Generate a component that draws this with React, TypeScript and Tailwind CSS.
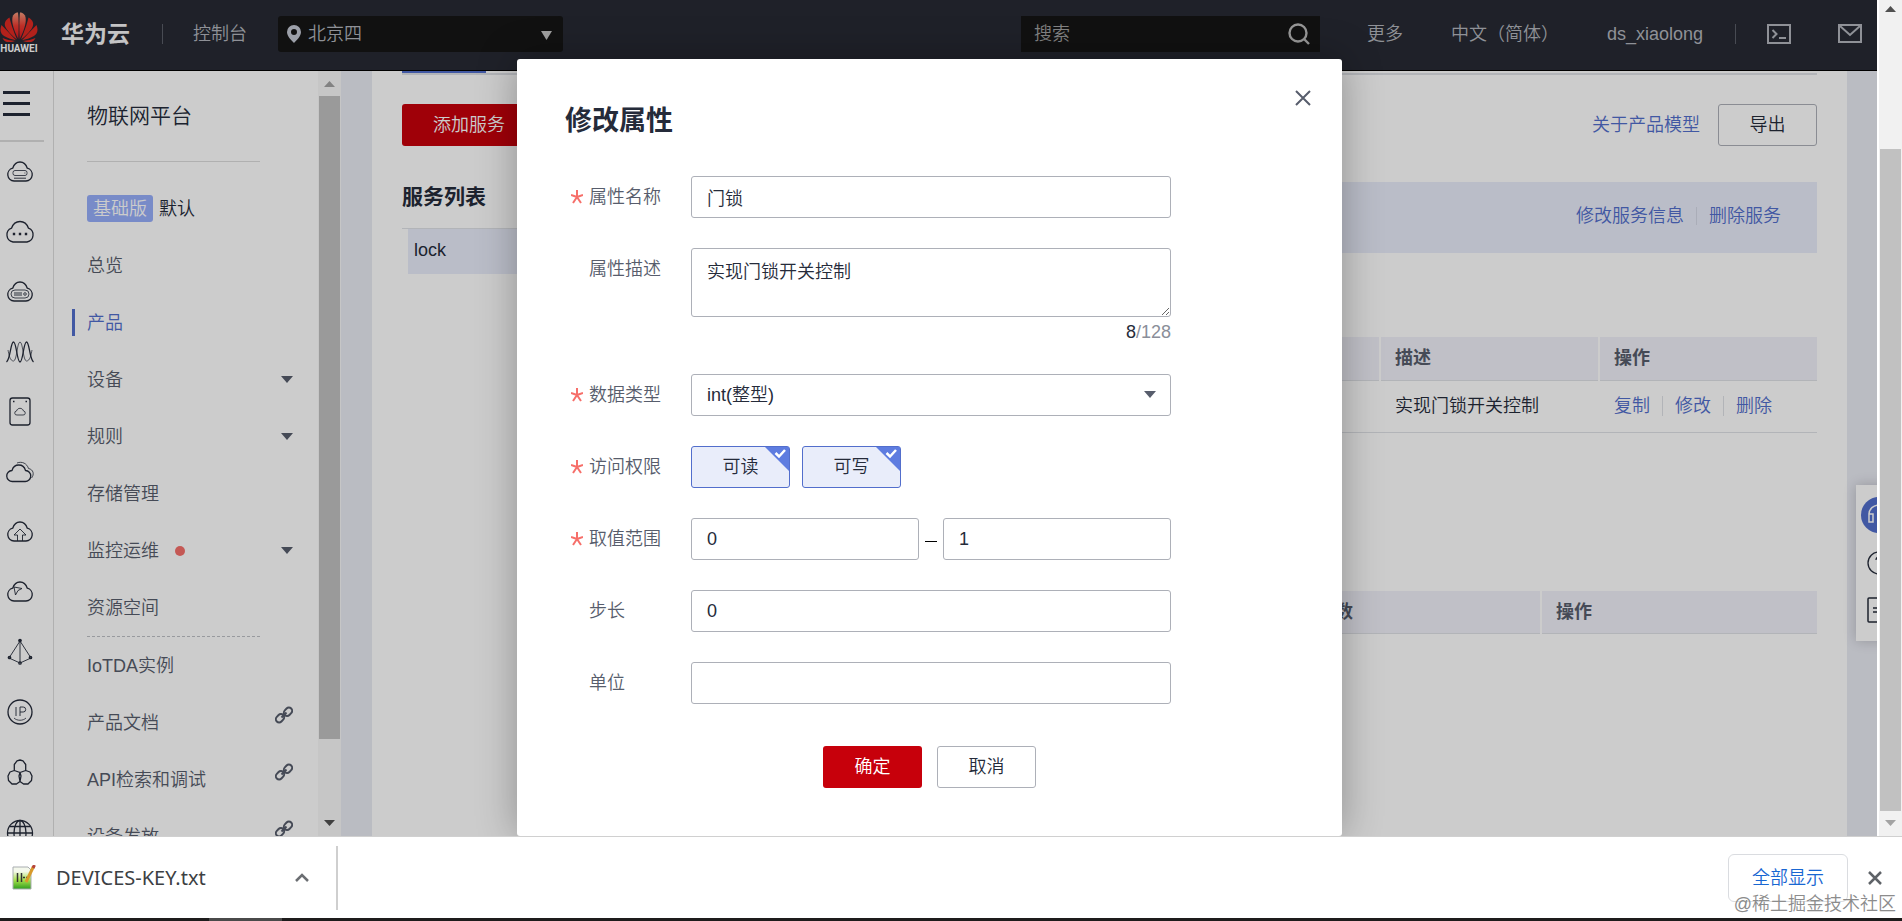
import { useState, type ReactNode } from "react";

interface MenuItem {
    name: string;
    icon?: "arrow" | "link";
    dot?: boolean;
    active?: boolean;
}

const mainMenu: MenuItem[] = [
    { name: "总览" },
    { name: "产品", active: true },
    { name: "设备", icon: "arrow" },
    { name: "规则", icon: "arrow" },
    { name: "存储管理" },
    { name: "监控运维", icon: "arrow", dot: true },
    { name: "资源空间" },
];

const linkMenu: MenuItem[] = [
    { name: "IoTDA实例" },
    { name: "产品文档", icon: "link" },
    { name: "API检索和调试", icon: "link" },
    { name: "设备发放", icon: "link" },
];

const CLOUD = "M8 20H20A6.5 6.5 0 0 0 21.3 7.2C20 3.2 17.5 1 14 1S8 3.2 6.7 7.2A6.5 6.5 0 0 0 8 20Z";

const railIcons: { label: string; art: ReactNode }[] = [
    {
        label: "弹性云服务器",
        art: (
            <>
                <path d={CLOUD} />
                <rect x="7" y="9.5" width="14" height="5" rx="2" strokeWidth="0.8" />
                <path d="M18.5 12h.8M8 17.2h12" strokeWidth="0.9" />
            </>
        ),
    },
    {
        label: "云服务",
        art: (
            <>
                <path d="M7 21H21A7.2 7.2 0 0 0 22.5 7.2C21 3 18 .5 14 .5S7 3 5.5 7.2A7.2 7.2 0 0 0 7 21Z" />
                <path d="M6.8 13h2.4M12.8 13h2.4M18.8 13h2.4" strokeWidth="2.4" />
            </>
        ),
    },
    {
        label: "裸金属服务器",
        art: (
            <>
                <path d={CLOUD} />
                <rect x="5" y="9" width="18" height="8" rx="4" strokeWidth="0.8" />
                <path d="M8 12h8M8 14h8" strokeWidth="0.9" />
                <circle cx="19" cy="13" r="1.3" strokeWidth="0.8" />
            </>
        ),
    },
    {
        label: "弹性伸缩",
        art: (
            <>
                <path d="M.5 21C4.500 18 4.500 1 7.500 1s3.500 20 6.500 20S17.500 1 20.500 1s3 17 7 20" />
                <path d="M2 9C3 14 4 20 7.500 20S11 1 14 1s3 19 6.500 19S25 14 26 9" strokeWidth="0.7" />
            </>
        ),
    },
    {
        label: "云硬盘",
        art: (
            <>
                <rect x="4" y="-3" width="20" height="27" rx="2.500" />
                <path d="M7 .5h1.500M19.500 .5H21" />
                <path d="M11 14h6a2 2 0 0 0 .5-4c-.6-1.800-1.900-2.700-3.500-2.700S11.100 8.200 10.500 10a2 2 0 0 0 .5 4Z" strokeWidth="0.8" />
            </>
        ),
    },
    {
        label: "云备份",
        art: (
            <>
                <path d="M6.500 20.500H19A5.500 5.500 0 0 0 19.500 9.500C18.500 6 16 4 12.800 4S7 6 6 9.500A5.500 5.500 0 0 0 6.500 20.500Z" />
                <path d="M11 2c5-2 10 .5 11.500 5.500 5 1 6 6 3 9.500" strokeWidth="0.8" />
            </>
        ),
    },
    {
        label: "对象存储",
        art: (
            <>
                <path d={CLOUD} />
                <path d="M11.500 20v-6H8l6-6 6 6h-3.500v6" strokeWidth="0.9" />
            </>
        ),
    },
    {
        label: "内容分发",
        art: (
            <>
                <path d={CLOUD} />
                <path d="M8 6l8 1.500-4 2-2.500 4.500z" strokeWidth="0.9" />
            </>
        ),
    },
    {
        label: "虚拟私有云",
        art: (
            <>
                <path d="M14 0v21M14 0 3 17l11 5 11-5L14 0" strokeWidth="0.9" />
                <circle cx="14" cy="-.5" r="1.200" fill="currentColor" />
                <circle cx="3.500" cy="16.500" r="1.200" />
                <circle cx="24.500" cy="16.500" r="1.200" />
                <circle cx="14" cy="22" r="1.200" />
            </>
        ),
    },
    {
        label: "弹性公网IP",
        art: (
            <>
                <circle cx="14" cy="11" r="12" />
                <path d="M10 6v9M14 15V6h3.200a2.500 2.500 0 0 1 0 5H14" strokeWidth="0.9" />
                <path d="M8 17c3 3 9 3 12 0" strokeWidth="0.8" />
            </>
        ),
    },
    {
        label: "云容器引擎",
        art: (
            <path d="M8.300 9.500V3.500L11-.2 14-1l3 .8 2.700 3.700v6M14 11.500 8.300 9.500 4 11l-2 4 .5 4.500L6 23h4.500L14 20.500 17.500 23H22l3.500-3.500L26 15l-2-4-4.300-1.500ZM14 11.500l1 3.500-1 5.500-1-5.500Z" />
        ),
    },
    {
        label: "域名注册",
        art: (
            <>
                <circle cx="14" cy="12" r="12.500" />
                <ellipse cx="14" cy="12" rx="6" ry="12.500" />
                <path d="M14-.5v25M1.500 12h25M3.500 5.500h21M3.500 18.500h21" />
            </>
        ),
    },
];

export default function App() {
    return (
        <div className="flex h-screen flex-col overflow-hidden bg-white font-['Liberation_Sans','Noto_Sans_CJK_SC',sans-serif] text-[18px] leading-6 font-[350] text-[#252b3a]">
            <div className="flex min-h-0 flex-1">
                <div className="relative flex min-w-0 flex-1 flex-col overflow-hidden">
                    <TopBar />
                    <div className="flex min-h-0 flex-1">
                        <IconRail />
                        <SideMenu />
                        <ProductPage />
                    </div>
                    <FloatPanel />

                    {/* Mask + dialog */}
                    <div className="absolute inset-0 flex items-start justify-center bg-black/20 pt-[59px] pr-[18px]">
                        <EditDialog />
                    </div>
                </div>
                <PageScrollbar />
            </div>
            <DownloadBar />
        </div>
    );
}

function Triangle({ up, className }: { up?: boolean; className: string }) {
    return (
        <svg viewBox="0 0 12 7" preserveAspectRatio="none" className={className} fill="currentColor" aria-hidden="true">
            <path d={up ? "M0 7h12L6 0z" : "M0 0h12L6 7z"} />
        </svg>
    );
}

function TopBar() {
    return (
        <header className="flex h-[71px] shrink-0 items-start border-b border-black bg-[#272a34] pt-4 text-[#b3b6bd]">
            <a href="#" aria-label="HUAWEI" className="-mt-1 flex w-[38px] shrink-0 flex-col items-center">
                <svg viewBox="0 0 38 30" className="h-[30px] w-[38px]">
                    <defs>
                        <linearGradient id="petal" x1="0" y1="0" x2="0" y2="1">
                            <stop offset="0" stopColor="#f59a7c" />
                            <stop offset="0.5" stopColor="#ee3b32" />
                            <stop offset="1" stopColor="#d8141c" />
                        </linearGradient>
                    </defs>
                    <g fill="url(#petal)">
                        <path d="M18.300 27C13 17 11 8 13 3.500 14.500 1 17 .5 18 .5c.8 6 .8 18 .3 26.500Z" />
                        <path d="M19.700 27C25 17 27 8 25 3.500 23.500 1 21 .5 20 .5c-.8 6-.8 18-.3 26.500Z" />
                    </g>
                    <g fill="#e02a22">
                        <path d="M17 27.500C13 18 10.500 10 9.500 5.500 5 8 3.500 12 6 16c2 3.500 7 8.500 11 11.500Z" />
                        <path d="M21 27.500c4-9.500 6.500-17.500 7.500-22C33 8 34.500 12 32 16c-2 3.500-7 8.500-11 11.500Z" />
                        <path d="M16 28.200C10 22 5 16.500 1.500 13-.5 18 .5 22 4.500 24.200c3 1.800 8 3.300 11.500 4Z" />
                        <path d="M22 28.200c6-6.200 11-11.700 14.500-15.200 2 5 1 9-3 11.200-3 1.800-8 3.300-11.500 4Z" />
                        <path d="M15.500 29c-5-.5-9.500-1.500-13-3 1.500 3.500 4 4.500 7 4 2 0 4.500-.5 6-1Z" />
                        <path d="M22.500 29c5-.5 9.500-1.500 13-3-1.500 3.500-4 4.500-7 4-2 0-4.500-.5-6-1Z" />
                    </g>
                </svg>
                <span className="font-['Roboto',sans-serif] text-[10px] leading-[14px] font-bold text-white">HUAWEI</span>
            </a>
            <div className="flex h-9 min-w-0 flex-1 items-center">
                <span className="ml-[23px] shrink-0 text-[23px] font-bold text-[#f5f5f7]">华为云</span>
                <span className="ml-8 h-5 w-px shrink-0 bg-[#5b5e68]" />
                <a href="#" className="ml-[30px] shrink-0">控制台</a>
                <label className="relative ml-[31px] block w-[285px] shrink-0">
                    <svg viewBox="0 0 14 18" className="absolute top-[9px] left-[9px] h-[18px] w-[14px]" fill="#c4c8d4">
                        <path fillRule="evenodd" d="M7 0a7 7 0 0 0-7 7c0 4 4 8 7 11 3-3 7-7 7-11a7 7 0 0 0-7-7Zm0 4a3 3 0 1 1 0 6 3 3 0 0 1 0-6Z" />
                    </svg>
                    <select aria-label="区域" className="h-9 w-full appearance-none rounded-[3px] bg-[#161616] pl-[30px] text-[18px] outline-none">
                        <option>北京四</option>
                    </select>
                    <Triangle className="pointer-events-none absolute top-[15px] right-[11px] h-[9px] w-[11px] text-[#c9c9c9]" />
                </label>
                <label className="relative ml-auto block w-[299px] shrink-0">
                    <input
                        type="search"
                        aria-label="搜索"
                        placeholder="搜索"
                        className="h-9 w-full bg-[#161616] pl-[13px] text-[18px] outline-none placeholder:text-[#a3a3a3]"
                    />
                    <svg viewBox="0 0 22 22" className="absolute top-[7px] right-[10px] h-[22px] w-[22px]" fill="none" stroke="#bdbdbd" strokeWidth="2.400">
                        <circle cx="10" cy="10" r="8.500" />
                        <path d="m16 16 5 5" />
                    </svg>
                </label>
                <nav className="flex shrink-0 items-center">
                    <a href="#" className="ml-[47px]">更多</a>
                    <a href="#" className="ml-12">中文（简体）</a>
                    <a href="#" className="ml-12">ds_xiaolong</a>
                    <span className="ml-8 h-5 w-px bg-[#5b5e68]" />
                    <button type="button" aria-label="命令行" className="ml-[31px]">
                        <svg viewBox="0 0 24 20" className="h-5 w-6" fill="none" stroke="currentColor" strokeWidth="2">
                            <rect x="1" y="1" width="22" height="18" />
                            <path d="m5.500 6 4 4-4 4M12 14h7" />
                        </svg>
                    </button>
                    <button type="button" aria-label="消息" className="mr-[15px] ml-[47px]">
                        <svg viewBox="0 0 24 20" className="h-5 w-6" fill="none" stroke="currentColor" strokeWidth="2">
                            <rect x="1" y="1" width="22" height="17" />
                            <path d="m2 2 10 9L22 2" />
                        </svg>
                    </button>
                </nav>
            </div>
        </header>
    );
}

function IconRail() {
    return (
        <aside className="w-[54px] shrink-0 overflow-hidden border-r border-[#dcdcdc]">
            <button type="button" aria-label="服务列表" className="mt-5 ml-[3px] flex h-[25px] w-[27px] flex-col justify-between">
                <span className="h-[3px] w-full bg-[#252b3a]" />
                <span className="h-[3px] w-full bg-[#252b3a]" />
                <span className="h-[3px] w-full bg-[#252b3a]" />
            </button>
            <hr className="mt-6 w-11 border-t-2 border-[#dcdcdc]" />
            <ul>
                {railIcons.map((item) => (
                    <li key={item.label} className="flex h-[60px] items-center pl-[6px]">
                        <a href="#" aria-label={item.label} title={item.label}>
                            <svg
                                viewBox="0 0 28 22"
                                className="h-[22px] w-7 overflow-visible text-[#252b3a]"
                                fill="none"
                                stroke="currentColor"
                                strokeWidth="1.300"
                                strokeLinejoin="round"
                            >
                                {item.art}
                            </svg>
                        </a>
                    </li>
                ))}
            </ul>
        </aside>
    );
}

function MenuRow({ item }: { item: MenuItem }) {
    return (
        <li>
            <a
                href="#"
                className={`relative flex h-[57px] items-center pr-[25px] pl-[33px] ${item.active ? "text-[#526ecc]" : "text-[#575d6c]"}`}
            >
                {item.active && <span className="absolute left-[18px] h-[27px] w-[3px] bg-[#526ecc]" />}
                {item.name}
                {item.dot && <span className="ml-4 h-[10px] w-[10px] rounded-full bg-[#f66f6a]" />}
                {item.icon === "arrow" && <Triangle className="ml-auto h-[7px] w-3" />}
                {item.icon === "link" && (
                    <svg viewBox="0 0 18 18" className="mb-4 ml-auto h-[18px] w-[18px]" fill="none" stroke="currentColor" strokeWidth="2">
                        <rect x="8.500" y="2.500" width="9" height="6.500" rx="3.250" transform="rotate(-45 13 5.750)" />
                        <rect x=".5" y="9" width="9" height="6.500" rx="3.250" transform="rotate(-45 5 12.250)" />
                        <path d="m6.500 11.500 5-5" />
                    </svg>
                )}
            </a>
        </li>
    );
}

function SideMenu() {
    return (
        <aside className="flex w-[287px] shrink-0 overflow-hidden">
            <div className="w-[264px] shrink-0">
                <h2 className="mr-[58px] ml-[33px] h-[91px] border-b border-[#dcdcdc] pt-[33px] text-[21px]">物联网平台</h2>
                <p className="mt-[33px] flex h-[27px] items-center gap-[6px] pl-[33px]">
                    <span className="flex h-[27px] items-center rounded-[3px] bg-[#97aefa] px-[6px] text-white">基础版</span>
                    默认
                </p>
                <ul className="mt-[15px]">
                    {mainMenu.map((item) => (
                        <MenuRow key={item.name} item={item} />
                    ))}
                </ul>
                <hr className="mr-[58px] ml-[33px] border-t border-dashed border-[#bfc1c6]" />
                <ul>
                    {linkMenu.map((item) => (
                        <MenuRow key={item.name} item={item} />
                    ))}
                </ul>
            </div>
            <div className="flex w-[23px] flex-col items-center bg-[#f8f8f8]">
                <Triangle up className="mt-[10px] h-[6px] w-[11px] text-[#a3a3a3]" />
                <div className="mt-[9px] w-[21px] flex-1 bg-[#c1c1c1]" />
                <Triangle className="mt-[81px] mb-[10px] h-[6px] w-[11px] text-[#505050]" />
            </div>
        </aside>
    );
}

function ProductPage() {
    return (
        <main className="min-w-0 flex-1 bg-[#e9ebf3] pr-[30px] pl-[31px]">
            <div className="h-full bg-white px-[30px]">
                <div className="border-b-2 border-[#dfe1e6]">
                    <div className="h-[2px] w-[84px] bg-[#526ecc]" />
                </div>

                <div className="mt-[29px] flex items-center">
                    <button type="button" className="h-[42px] rounded-[3px] bg-[#c7000b] px-[31px] text-white">添加服务</button>
                    <a href="#" className="ml-auto text-[#526ecc]">关于产品模型</a>
                    <button type="button" className="ml-[18px] h-[42px] w-[99px] rounded-[3px] border border-[#adb0b8]">导出</button>
                </div>

                <div className="mt-9 flex gap-9">
                    <section className="w-[210px] shrink-0">
                        <h3 className="text-[21px] leading-[30px] font-bold">服务列表</h3>
                        <ul className="mt-4 border-t border-[#dfe1e6] pl-[6px]">
                            <li className="flex h-[45px] items-center bg-[#e9edfa] pb-[3px] pl-[6px]">lock</li>
                        </ul>
                    </section>

                    <section className="min-w-0 flex-1">
                        <div className="flex h-[71px] items-center justify-end bg-[#e9edfa] pr-9 pb-[3px] text-[#526ecc]">
                            <a href="#">修改服务信息</a>
                            <span className="mx-3 h-[18px] w-px bg-[#d5d9e6]" />
                            <a href="#">删除服务</a>
                        </div>

                        <table className="mt-[84px] w-full table-fixed text-left">
                            <thead className="border-b border-[#dfe1e6] bg-[#f0f1f9] text-[#575d6c]">
                                <tr className="h-[43px]">
                                    <td />
                                    <th className="w-[219px] border-l-2 border-white pl-[14px]">描述</th>
                                    <th className="w-[218px] border-l-2 border-white pl-[14px]">操作</th>
                                </tr>
                            </thead>
                            <tbody>
                                <tr className="h-[52px] border-b border-[#dfe1e6]">
                                    <td />
                                    <td className="pl-[15px]">实现门锁开关控制</td>
                                    <td className="pl-[15px]">
                                        <div className="flex items-center text-[#526ecc]">
                                            <a href="#">复制</a>
                                            <span className="mx-3 h-5 w-px bg-[#dfe1e6]" />
                                            <a href="#">修改</a>
                                            <span className="mx-3 h-5 w-px bg-[#dfe1e6]" />
                                            <a href="#">删除</a>
                                        </div>
                                    </td>
                                </tr>
                            </tbody>
                        </table>

                        <table className="mt-[158px] w-full table-fixed text-left">
                            <thead className="border-b border-[#dfe1e6] bg-[#f0f1f9] text-[#575d6c]">
                                <tr className="h-[43px]">
                                    <td />
                                    <th className="w-[224px]">参数</th>
                                    <th className="w-[276px] border-l-2 border-white pl-[14px]">操作</th>
                                </tr>
                            </thead>
                        </table>
                    </section>
                </div>
            </div>
        </main>
    );
}

function FloatPanel() {
    return (
        <div className="absolute top-[485px] -right-[27px] flex h-[156px] w-12 flex-col items-center bg-white pt-3 pr-[3px] shadow-[0_0_12px_rgba(0,0,0,0.2)]">
            <button type="button" aria-label="客服" className="flex h-9 w-9 items-center justify-center rounded-full bg-[#526ecc]">
                <svg viewBox="0 0 24 24" className="h-6 w-6" fill="none" stroke="#fff" strokeWidth="1.500">
                    <path d="M2 14V11a10 9 0 0 1 20 0v3M2 11h4v8H2zM18 11h4v8h-4zM20 19c0 3-4 4-8 4" />
                </svg>
            </button>
            <button type="button" aria-label="帮助" className="mt-[18px]">
                <svg viewBox="0 0 24 24" className="h-6 w-6" fill="none" stroke="#252b3a" strokeWidth="1.300">
                    <circle cx="12" cy="12" r="11" />
                    <path d="M9 9c0-4 6-4 6 0 0 2-3 2-3 5M12 16v2" />
                </svg>
            </button>
            <button type="button" aria-label="反馈" className="mt-[22px]">
                <svg viewBox="0 0 24 26" className="h-[26px] w-6" fill="none" stroke="#252b3a" strokeWidth="1.500">
                    <rect x="1" y="1" width="22" height="24" rx="1" />
                    <path d="M6 11h12M6 15h12" />
                </svg>
            </button>
        </div>
    );
}

function PageScrollbar() {
    return (
        <div className="flex w-[25px] shrink-0 flex-col items-center border-l-2 border-white bg-[#f1f1f1]">
            <Triangle up className="mt-[6px] h-[6px] w-[11px] text-[#505050]" />
            <div className="mt-[137px] w-[21px] flex-1 bg-[#c1c1c1]" />
            <Triangle className="mt-[9px] mb-[10px] h-[6px] w-[11px] text-[#a3a3a3]" />
        </div>
    );
}

function Field({ label, id, required, children }: { label: string; id: string; required?: boolean; children: ReactNode }) {
    return (
        <div className="mb-[30px] flex items-start">
            <label htmlFor={id} className="flex h-[42px] w-[120px] shrink-0 items-center text-[#575d6c]">
                <span className="w-[18px] shrink-0">
                    {required && (
                        <svg viewBox="0 0 12 14" className="h-[14px] w-3" stroke="#f66f6a" strokeWidth="2" aria-hidden="true">
                            <path d="M6 0v7M6 7 0 5M6 7l6-2M6 7l-4 6M6 7l4 6" />
                        </svg>
                    )}
                </span>
                {label}
            </label>
            <div className="w-[480px]">{children}</div>
        </div>
    );
}

const inputStyle =
    "block h-[42px] w-full rounded-[3px] border border-[#adb0b8] bg-white px-[15px] text-[18px] text-[#252b3a] outline-none";

function EditDialog() {
    const [name, setName] = useState("门锁");
    const [description, setDescription] = useState("实现门锁开关控制");
    const [access, setAccess] = useState({ 可读: true, 可写: true });

    return (
        <form
            role="dialog"
            aria-labelledby="dialog-title"
            className="relative w-[825px] rounded-[3px] bg-white px-12 pt-11 pb-12 shadow-[0_0_40px_rgba(0,0,0,0.3)]"
        >
            <h1 id="dialog-title" className="text-[27px] leading-9 font-bold">修改属性</h1>
            <button type="button" aria-label="关闭" className="absolute top-[31px] right-[31px]">
                <svg viewBox="0 0 16 16" className="h-4 w-4" stroke="#575d6c" strokeWidth="2">
                    <path d="m1 1 14 14M15 1 1 15" />
                </svg>
            </button>

            <div className="mt-[37px] pl-[6px]">
                <Field label="属性名称" id="name" required>
                    <input id="name" value={name} onChange={(e) => setName(e.target.value)} className={inputStyle} />
                </Field>
                <Field label="属性描述" id="description">
                    <textarea
                        id="description"
                        value={description}
                        onChange={(e) => setDescription(e.target.value)}
                        className="block h-[69px] w-full rounded-[3px] border border-[#adb0b8] px-[15px] py-[11px] outline-none"
                    />
                    <p className="h-[27px] pt-[3px] text-right text-[#8a8e99]">
                        <span className="text-[#252b3a]">{description.length}</span>/128
                    </p>
                </Field>
                <Field label="数据类型" id="type" required>
                    <div className="relative">
                        <select id="type" className={`${inputStyle} appearance-none`}>
                            <option>int(整型)</option>
                        </select>
                        <Triangle className="pointer-events-none absolute top-[17px] right-[15px] h-[7px] w-3 text-[#575d6c]" />
                    </div>
                </Field>
                <Field label="访问权限" id="access-可读" required>
                    <div className="flex gap-3">
                        {(["可读", "可写"] as const).map((key) => (
                            <label
                                key={key}
                                className={`relative flex h-[42px] w-[99px] items-center justify-center rounded-[3px] border ${access[key] ? "border-[#526ecc] bg-[#e9edfa]" : "border-[#adb0b8]"}`}
                            >
                                <input
                                    id={`access-${key}`}
                                    type="checkbox"
                                    checked={access[key]}
                                    onChange={() => setAccess({ ...access, [key]: !access[key] })}
                                    className="absolute inset-0 appearance-none"
                                />
                                {key}
                                {access[key] && (
                                    <svg viewBox="0 0 24 24" className="absolute top-0 right-0 h-6 w-6">
                                        <path d="M0 0h24v24z" fill="#5e7ce0" />
                                        <path d="m10.500 6 3.500 3.500 6-6.500" fill="none" stroke="#fff" strokeWidth="2.500" />
                                    </svg>
                                )}
                            </label>
                        ))}
                    </div>
                </Field>
                <Field label="取值范围" id="min" required>
                    <div className="flex items-center">
                        <input id="min" defaultValue="0" className={inputStyle} />
                        <span className="mx-[6px] mt-1 h-px w-3 shrink-0 bg-black" />
                        <input aria-label="最大值" defaultValue="1" className={inputStyle} />
                    </div>
                </Field>
                <Field label="步长" id="step">
                    <input id="step" defaultValue="0" className={inputStyle} />
                </Field>
                <Field label="单位" id="unit">
                    <input id="unit" className={inputStyle} />
                </Field>
            </div>

            <div className="mt-[42px] flex justify-center gap-[15px]">
                <button type="button" className="h-[42px] w-[99px] rounded-[3px] bg-[#c7000b] text-white">确定</button>
                <button type="button" className="h-[42px] w-[99px] rounded-[3px] border border-[#adb0b8]">取消</button>
            </div>
        </form>
    );
}

function DownloadBar() {
    return (
        <footer className="shrink-0">
            <div className="relative flex h-[82px] items-center border-t border-[#d0d0d0] bg-white">
                <svg viewBox="0 0 24 26" className="ml-3 h-[26px] w-6">
                    <defs>
                        <linearGradient id="page" x1="0" y1="0" x2="0" y2="1">
                            <stop offset="0.2" stopColor="#f4f8ec" />
                            <stop offset="0.6" stopColor="#a5e04a" />
                            <stop offset="1" stopColor="#2f9e1d" />
                        </linearGradient>
                    </defs>
                    <path d="M1 2h15l3 3v19H1z" fill="url(#page)" stroke="#a9adb0" />
                    <path d="M5.500 8v9M9.500 8v9M11 12.500h2M14 12.500h2" stroke="#333" strokeWidth="1.500" />
                    <path d="M21.500 1.500 14 17" stroke="#d89a2b" strokeWidth="3" />
                    <path d="M22.500 0 21 3" stroke="#b5443c" strokeWidth="3" />
                </svg>
                <a href="#" className="ml-5 font-['Noto_Sans',sans-serif] text-[20px] font-normal text-[#3c4043]">DEVICES-KEY.txt</a>
                <button type="button" aria-label="更多操作" className="ml-[89px]">
                    <svg viewBox="0 0 14 9" className="h-[9px] w-[14px]" fill="none" stroke="#6b6e72" strokeWidth="2.500">
                        <path d="m1 8 6-6 6 6" />
                    </svg>
                </button>
                <span className="ml-[27px] h-16 w-[2px] bg-[#cfcfcf]" />
                <button type="button" className="ml-auto h-12 w-[120px] rounded-[6px] border border-[#dadce0] text-[#1967d2]">全部显示</button>
                <button type="button" aria-label="关闭" className="mr-5 ml-5">
                    <svg viewBox="0 0 14 14" className="h-[14px] w-[14px]" stroke="#5f6368" strokeWidth="2.500">
                        <path d="m1 1 12 12M13 1 1 13" />
                    </svg>
                </button>
                <span className="absolute right-[6px] bottom-[2px] text-[#8c8c8c]">@稀土掘金技术社区</span>
            </div>
            <div className="h-[3px] bg-[#1e1c1c] pl-[209px]">
                <div className="h-full w-[73px] bg-[#4a4a4a]" />
            </div>
        </footer>
    );
}
